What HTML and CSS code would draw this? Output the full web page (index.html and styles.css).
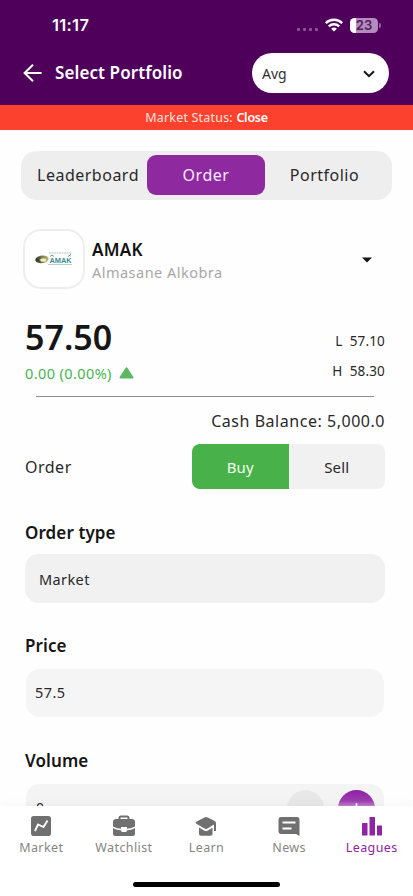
FILE: index.html
```html
<!DOCTYPE html>
<html lang="en">
<head>
<meta charset="utf-8">
<title>Select Portfolio</title>
<link rel="stylesheet" href="styles.css">
</head>
<body>
<div class="app">
  <header class="header">
    <div class="status">
      <span class="clock">11:17</span>
      <div class="indicators">
        <span class="dots"><i></i><i></i><i></i><i></i></span>
        <svg class="wifi" width="18" height="14" viewBox="0 0 18 14" fill="none" stroke="#fff" stroke-width="2.4"><path d="M.8 5.1C5.3.7 12.700.7 17.200 5.1M3.800 8.400c2.9-2.800 7.500-2.800 10.400 0"/><path d="M9 13.600 6.100 10.700c1.600-1.500 4.200-1.500 5.800 0Z" fill="#fff" stroke="none"/></svg>
        <span class="battery"><b>23</b></span>
        <span class="cap"></span>
      </div>
    </div>
    <div class="titlebar">
      <svg class="back" width="20" height="18" viewBox="0 0 20 18" fill="none" stroke="#fff" stroke-width="2"><path d="M10 .8 1.600 9l8.400 8.200M1.600 9h17"/></svg>
      <h1>Select Portfolio</h1>
      <div class="select"><span>Avg</span><svg width="12" height="8" viewBox="0 0 12 8" fill="none" stroke="#151515" stroke-width="2"><path d="m1 1.2 5 5 5-5"/></svg></div>
    </div>
  </header>
  <div class="market">Market Status: <b>Close</b></div>
  <main>
    <nav class="tabs"><span class="tab first">Leaderboard</span><span class="tab active">Order</span><span class="tab last">Portfolio</span></nav>
    <section class="stock">
      <div class="logo">
        <svg width="38" height="14" viewBox="0 0 38 14">
          <defs><linearGradient id="orb"><stop offset="0" stop-color="#292e27"/><stop offset=".5" stop-color="#777653"/><stop offset="1" stop-color="#c1b77b"/></linearGradient></defs>
          <ellipse cx="7" cy="7.300" rx="6.700" ry="3.800" fill="url(#orb)" transform="rotate(-8 7 7.300)"/>
          <ellipse cx="8.300" cy="8" rx="3.100" ry="1.800" fill="#f3ebaf"/>
          <path d="M14 1h23" stroke="#b4c2be" stroke-width="1" stroke-dasharray="2 .5"/>
          <path d="M15 4.500l2-1.500 2 1.500M33 4.500l3-2" stroke="#51a486" fill="none"/>
          <text x="14.500" y="11" class="logo-text" textLength="22" lengthAdjust="spacingAndGlyphs">AMAK</text>
          <path d="M13 12.500h24" stroke="#a3c6c1" stroke-width=".8"/>
        </svg>
      </div>
      <div class="names"><strong>AMAK</strong><span>Almasane Alkobra</span></div>
      <svg class="caret" width="10" height="6" viewBox="0 0 10 6"><path d="M0 .5h10L5 5.500Z" fill="#151515"/></svg>
    </section>
    <section class="quote">
      <div><div class="price">57.50</div><div class="change"><span>0.00 (0.00%)</span><svg width="15" height="12" viewBox="0 0 15 12"><path d="M7.500 1.400 1.500 10.500h12Z" fill="#5cb860" stroke="#5cb860" stroke-width="2" stroke-linejoin="round"/></svg></div></div>
      <div class="range"><span>L&nbsp; 57.10</span><span>H&nbsp; 58.30</span></div>
    </section>
    <hr>
    <div class="cash">Cash Balance: 5,000.0</div>
    <div class="side"><span class="side-label">Order</span><div class="toggle"><span class="buy">Buy</span><span class="sell">Sell</span></div></div>
    <h2>Order type</h2>
    <div class="field">Market</div>
    <h2 class="price-title">Price</h2>
    <div class="field light">57.5</div>
    <h2 class="volume-title">Volume</h2>
    <div class="volume"><span class="zero">0</span><span class="round minus"></span><span class="round plus">+</span></div>
  </main>
  <footer>
    <nav class="bottom">
      <a><svg viewBox="0 0 24 24"><rect x="2" y="2" width="20" height="20" rx="2.800"/><path d="m6 17 3-6.500 5.500 2.500 4-6.500" fill="none" stroke="#fff" stroke-width="1.900"/></svg><span>Market</span></a>
      <a><svg viewBox="0 0 24 24"><path d="M6.500 5V4Q6.500 1.500 9 1.500h6Q17.500 1.500 17.500 4v1H20q3 0 3 3v4.500q-3 2-8 2.300V13H9v1.800q-5-.3-8-2.300V8q0-3 3-3ZM8.500 5h7V3.500h-7Z" fill-rule="evenodd"/><path d="M1 14.200q4 2 8.500 2.300v1.500h5v-1.500q4.500-.3 8.500-2.300V20q0 2-2 2H3q-2 0-2-2Z"/></svg><span>Watchlist</span></a>
      <a><svg viewBox="0 0 24 24"><path d="M12 3Q13 3 21 7.200q1 .5 1 1.800v8h-2V10.500l-6.500 4q-1.500.8-3 0L2 9.400q-1-.7 0-1.400Q11 3 12 3Z"/><path d="m5 13.500 5.500 3.300q1.500.8 3 0l5-3V20q0 1.800-2 1.800H7q-2 0-2-1.800Z"/></svg><span>Learn</span></a>
      <a><svg viewBox="0 0 24 24"><path d="M4 3h16q2.500 0 2.500 3v16l-3.500-2H4q-2.500 0-2.500-3V6q0-3 2.500-3Z"/><path d="M5.500 8.500h13M5.500 14.500h9" stroke="#fff" stroke-width="2.200"/></svg><span>News</span></a>
      <a class="current"><svg viewBox="0 0 24 24"><rect x="2" y="9" width="5.500" height="12.500" rx=".6"/><rect x="9.500" y="3" width="5.500" height="18.500" rx=".6"/><rect x="17" y="11.500" width="5" height="10" rx=".6"/></svg><span>Leagues</span></a>
    </nav>
    <div class="home"></div>
  </footer>
</div>
</body>
</html>
```
FILE: styles.css
```css
* { box-sizing: border-box; }
body { margin: 0; background: #fefefe; color: #292929; font-family: "Noto Sans", sans-serif; }
.app { width: 413px; height: 896px; overflow: hidden; display: flex; flex-direction: column; }
.header { height: 105px; flex: none; background: #4f005b; color: #fff; }
.status { height: 50px; padding: 14px 32px 0 52px; display: flex; justify-content: space-between; }
.clock { font: 600 16.500px/23px Inter, sans-serif; letter-spacing: .3px; }
.indicators { height: 22px; display: flex; align-items: center; }
.dots { display: flex; gap: 3px; padding-top: 9px; margin-right: 7px; }
.dots i { width: 3px; height: 3px; border-radius: 1px; background: #8a559a; }
.wifi { margin-right: 7px; }
.battery { width: 28px; height: 15px; border-radius: 4.500px; background: linear-gradient(90deg, #fff 6px, #b58abd 6px); color: #4f205b; display: grid; place-items: center; }
.battery b { font: 600 13px/15px Inter, sans-serif; }
.cap { width: 2px; height: 5px; margin-left: 1px; background: #9a68a5; border-radius: 0 2px 2px 0; }
.titlebar { display: flex; align-items: center; height: 46px; padding: 0 24px 0 23px; }
.titlebar h1 { margin: 0 auto 0 12px; font-size: 17px; line-height: 24px; font-weight: 600; letter-spacing: .1px; }
.select { width: 137px; height: 40px; border-radius: 20px; background: #fff; color: #303030; display: flex; align-items: center; justify-content: space-between; padding: 1px 14px 0 10px; font-size: 14px; }
.market { height: 25px; flex: none; background: #fc412e; color: #ffe2db; font-size: 12.500px; line-height: 26px; text-align: center; letter-spacing: .2px; }
.market b { color: #fff; font-weight: 600; letter-spacing: -.25px; }
main { height: 676px; flex: none; overflow: hidden; padding: 20px 28px 0 25px; }
.tabs { display: flex; width: 371px; height: 49px; margin: 1px 0 0 -4px; padding: 4px 9px 5px 7px; border-radius: 15px; background: #eee; }
.tab { display: grid; place-items: center; height: 40px; width: 118px; font-size: 16px; letter-spacing: .5px; }
.tab.first { width: 119px; padding-left: 1px; }
.tab.last { padding-left: 1px; }
.active { color: #fbeaff; background: #8e29a0; border-radius: 9px; }
.stock { display: flex; align-items: center; height: 60px; margin: 29px 0 1px -2px; }
.logo { width: 62px; height: 60px; border: 2px solid #eee; border-radius: 18px; background: #fff; display: grid; place-items: center; }
.logo-text { font: 700 8px "Liberation Sans", sans-serif; fill: #3c8b92; }
.names { margin: 2px auto 0 7px; display: flex; flex-direction: column; }
.names strong { font-size: 17px; line-height: 23px; font-weight: 600; color: #111; letter-spacing: .3px; }
.names span { font-size: 14.500px; line-height: 22px; color: #a7a7a7; letter-spacing: .48px; }
.caret { margin: 1px 13px 0 0; }
.quote { display: flex; justify-content: space-between; height: 106px; padding-top: 23px; }
.price { font-size: 34px; font-weight: 600; color: #161616; line-height: 49px; letter-spacing: 0; }
.change { display: flex; gap: 7px; align-items: center; height: 22px; color: #48b450; font-size: 14.500px; letter-spacing: .4px; }
.range { display: flex; flex-direction: column; align-items: flex-end; font-size: 13.500px; line-height: 29.500px; padding-top: 14px; letter-spacing: .15px; }
hr { width: 338px; height: 1px; margin: 0 0 0 11px; border: 0; background: #8d8d8d; }
.cash { margin-top: 12px; height: 24px; text-align: right; font-size: 16px; line-height: 24px; letter-spacing: .53px; }
.side { margin-top: 11px; height: 45px; display: flex; align-items: center; justify-content: space-between; font-size: 16px; letter-spacing: .5px; }
.toggle { display: flex; width: 193px; height: 45px; overflow: hidden; border-radius: 8px; }
.toggle span { flex: 1; display: grid; place-items: center; font-size: 15px; letter-spacing: .15px; }
.toggle .buy { background: #48b149; color: #effff0; }
.toggle .sell { background: #f1f1f1; }
h2 { margin: 32px 0 0; font-size: 17px; line-height: 24px; font-weight: 600; color: #151515; letter-spacing: .1px; }
.price-title { margin-top: 31px; }
.volume-title { margin-top: 32px; }
.field { height: 49px; margin-top: 9px; padding: 0 14px; border-radius: 14px; background: #f1f1f1; font-size: 14.500px; line-height: 50px; letter-spacing: .4px; }
.field.light { width: 358px; height: 48px; margin: 11px 0 0 1px; padding-left: 9px; line-height: 47px; background: #f5f5f5; }
.volume { width: 358px; height: 49px; margin: 11px 0 0 1px; padding: 6px 9px; display: flex; background: #f4f4f4; border-radius: 14px; }
.zero { flex: 1; padding-left: 1px; font-size: 14px; line-height: 35px; }
.round { width: 37px; height: 37px; border-radius: 50%; }
.minus { background: #e8e8e8; margin-right: 14px; }
.plus { background: linear-gradient(#8e1fa4 0, #9d3fb0 30%, #d4a6df 50%); color: #fff; text-align: center; line-height: 36px; font-size: 20px; }
footer { height: 90px; flex: none; background: #fff; position: relative; box-shadow: 0 -3px 8px #00000008; }
.bottom { display: grid; grid-template-columns: repeat(5, 1fr); height: 56px; }
.bottom a { color: #707070; display: flex; flex-direction: column; align-items: center; padding-top: 8px; }
.bottom svg { width: 24px; height: 24px; fill: currentColor; }
.bottom span { font-size: 12.500px; line-height: 19px; letter-spacing: .4px; color: #858585; }
.bottom .current, .bottom .current span { color: #8e25a4; }
.home { width: 147px; height: 5px; margin: 20px auto 0; background: #000; border-radius: 3px; }
```
